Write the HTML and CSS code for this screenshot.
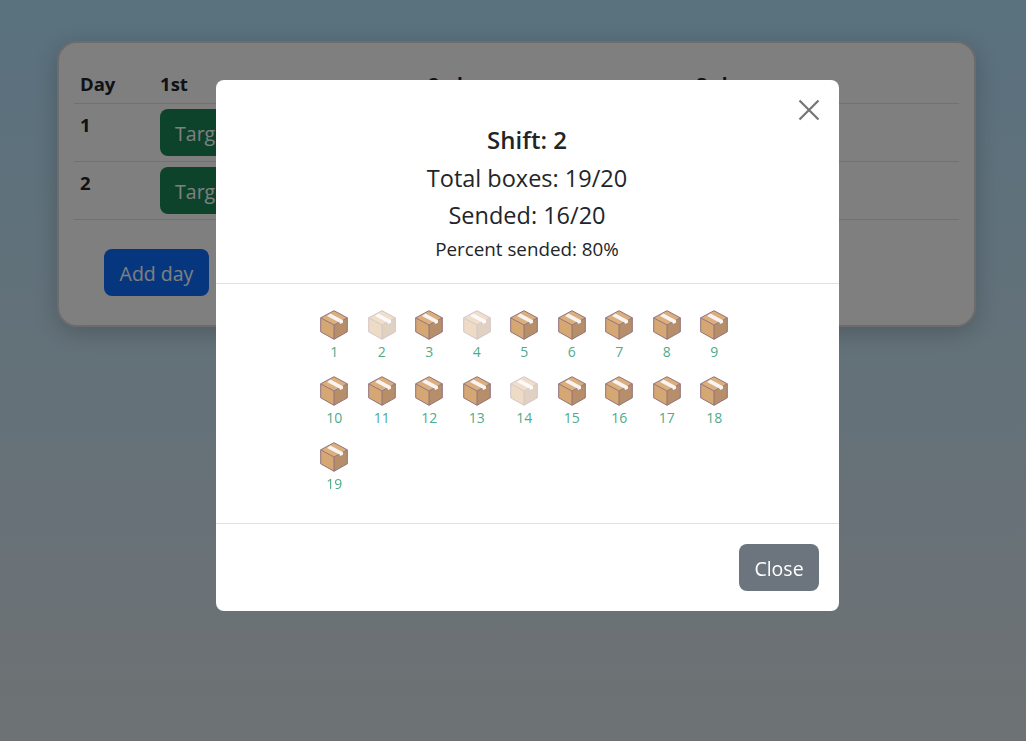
FILE: index.html
```html
<!DOCTYPE html>
<html lang="en">
<head>
<meta charset="utf-8">
<title>Shift</title>
<link rel="stylesheet" href="styles.css">
</head>
<body>
<svg class="defs" width="0" height="0" aria-hidden="true">
  <symbol id="box" viewBox="0 0 28 30">
    <path d="M14 15 .7 7.800v14L14 29.300z" fill="#d4a773"/>
    <path d="M14 15 27.300 7.800v14L14 29.300z" fill="#b68e69"/>
    <path d="M14 .7 27.300 7.800 14 15 .7 7.800z" fill="#dbae7c"/>
    <path d="M14 .7 27.300 7.800v14L14 29.300.7 21.800v-14zM.7 7.800 14 15 27.300 7.800M14 15v14.300" fill="none" stroke="#93727a" stroke-width="1" stroke-linejoin="round"/>
    <path d="M7 6.100 10.500 3.600 23 10.200v2.600l-3 1.300-.2-1.300z" fill="#f8f4f4"/>
  </symbol>
</svg>

<main class="card">
  <table class="days">
    <colgroup><col class="c-day"><col class="c-shift"><col class="c-shift"><col class="c-shift"></colgroup>
    <thead>
      <tr><th>Day</th><th>1st</th><th>2nd</th><th>3rd</th></tr>
    </thead>
    <tbody>
      <tr><th>1</th><td><button class="btn btn-green">Target</button></td><td></td><td></td></tr>
      <tr><th>2</th><td><button class="btn btn-green">Target</button></td><td></td><td></td></tr>
    </tbody>
  </table>
  <button class="btn btn-blue">Add day</button>
</main>

<div class="backdrop">
  <section class="modal">
    <button class="close" aria-label="Close">
      <svg viewBox="0 0 22 22" width="22" height="22"><path d="M1.500 1.500 20.500 20.500M20.500 1.500 1.500 20.500" stroke="#757575" stroke-width="2.200" fill="none"/></svg>
    </button>
    <header class="modal-head">
      <div class="l-shift">Shift: 2</div>
      <div class="l-big">Total boxes: 19/20</div>
      <div class="l-big l-sent">Sended: 16/20</div>
      <div class="l-small">Percent sended: 80%</div>
    </header>
    <div class="modal-body">
      <div class="boxes">
        <div class="item"><svg class="ico"><use href="#box"/></svg><span>1</span></div>
        <div class="item off"><svg class="ico"><use href="#box"/></svg><span>2</span></div>
        <div class="item"><svg class="ico"><use href="#box"/></svg><span>3</span></div>
        <div class="item off"><svg class="ico"><use href="#box"/></svg><span>4</span></div>
        <div class="item"><svg class="ico"><use href="#box"/></svg><span>5</span></div>
        <div class="item"><svg class="ico"><use href="#box"/></svg><span>6</span></div>
        <div class="item"><svg class="ico"><use href="#box"/></svg><span>7</span></div>
        <div class="item"><svg class="ico"><use href="#box"/></svg><span>8</span></div>
        <div class="item"><svg class="ico"><use href="#box"/></svg><span>9</span></div>
        <div class="item"><svg class="ico"><use href="#box"/></svg><span>10</span></div>
        <div class="item"><svg class="ico"><use href="#box"/></svg><span>11</span></div>
        <div class="item"><svg class="ico"><use href="#box"/></svg><span>12</span></div>
        <div class="item"><svg class="ico"><use href="#box"/></svg><span>13</span></div>
        <div class="item off"><svg class="ico"><use href="#box"/></svg><span>14</span></div>
        <div class="item"><svg class="ico"><use href="#box"/></svg><span>15</span></div>
        <div class="item"><svg class="ico"><use href="#box"/></svg><span>16</span></div>
        <div class="item"><svg class="ico"><use href="#box"/></svg><span>17</span></div>
        <div class="item"><svg class="ico"><use href="#box"/></svg><span>18</span></div>
        <div class="item"><svg class="ico"><use href="#box"/></svg><span>19</span></div>
      </div>
    </div>
    <footer class="modal-foot">
      <button class="btn btn-grey">Close</button>
    </footer>
  </section>
</div>
</body>
</html>
```
FILE: styles.css
```css
* { box-sizing: border-box; }
html, body { height: 100%; }
body {
  margin: 0;
  padding: 41px 50px 0 57px;
  overflow: hidden;
  font-family: "Open Sans", "Noto Sans", sans-serif;
  color: #212529;
  background: linear-gradient(180deg, #b4e2fd 0%, #dce4e8 100%);
}
.defs { position: absolute; }
.card {
  height: 286px;
  padding: 27px 15px 0;
  background: #fff;
  border: 2px solid #d8d8d8;
  border-radius: 20px;
  box-shadow: 0 6px 24px rgba(0, 0, 0, .2);
}
.days { width: 885px; table-layout: fixed; border-collapse: collapse; }
.c-day { width: 80px; }
.c-shift { width: 268px; }
.days th, .days td {
  padding: 5px 6px;
  text-align: left;
  vertical-align: top;
  border-bottom: 1px solid #dee2e6;
  font-size: 18.500px;
  font-weight: 700;
  line-height: 27px;
}
.days thead th { height: 33px; padding-top: 0; padding-bottom: 0; }
.days tbody th { padding-top: 7px; }
.days tbody tr { height: 58px; }
.btn {
  display: block;
  height: 47px;
  padding: 2px 15px 0;
  border: 0;
  border-radius: 8px;
  font: 400 19.500px/45px "Open Sans", "Noto Sans", sans-serif;
  color: #fff;
  white-space: nowrap;
}
.btn-green { background: #198754; }
.btn-blue { width: 105px; margin: 29px 0 0 30px; background: #0d6efd; }
.btn-grey { width: 80px; background: #6c757d; padding-left: 0; padding-right: 0; }
.backdrop {
  position: fixed;
  inset: 0;
  padding: 80px 0 0 216px;
  background: rgba(0, 0, 0, .5);
}
.modal {
  position: relative;
  width: 623px;
  height: 531px;
  display: flex;
  flex-direction: column;
  background: #fff;
  border-radius: 8px;
}
.close {
  position: absolute;
  top: 19px;
  right: 19px;
  width: 22px;
  height: 22px;
  padding: 0;
  border: 0;
  background: none;
}
.close svg { display: block; }
.modal-head {
  height: 204px;
  padding-top: 41px;
  padding-right: 1px;
  text-align: center;
  border-bottom: 1px solid #dee2e6;
  font-size: 23.500px;
  line-height: 38px;
}
.l-shift { font-size: 24px; font-weight: 600; }
.l-sent { margin-top: -1px; }
.l-small { padding-top: 1px; font-size: 18.800px; line-height: 29px; }
.modal-body {
  height: 240px;
  padding: 26px 0 0 94.500px;
  border-bottom: 1px solid #dee2e6;
}
.boxes {
  display: grid;
  grid-template-columns: repeat(9, 47.500px);
  grid-auto-rows: 66px;
}
.item {
  display: flex;
  flex-direction: column;
  align-items: center;
  font-size: 14px;
  line-height: 19px;
  color: #50ab8c;
}
.ico { width: 28px; height: 30px; margin-bottom: 2px; }
.off .ico { opacity: .4; }
.modal-foot {
  flex: 1;
  display: flex;
  justify-content: flex-end;
  padding: 20px 20px 0 0;
}
```
